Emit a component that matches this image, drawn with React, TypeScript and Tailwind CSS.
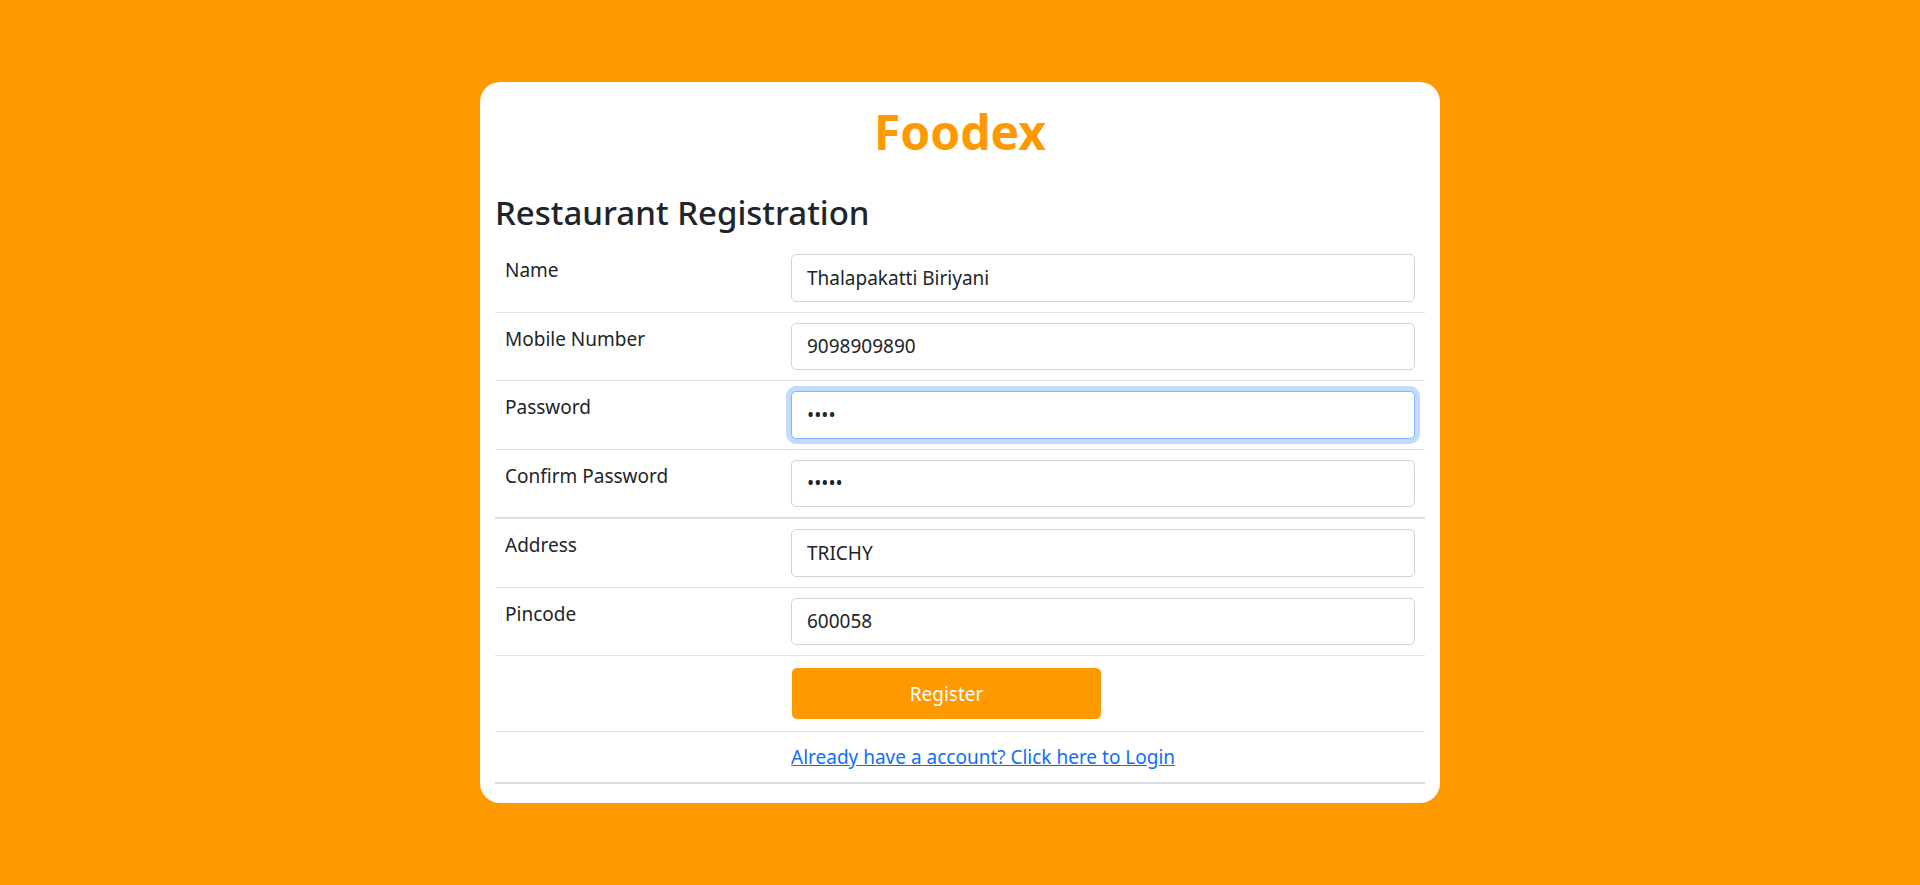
import { useState } from "react";

const fields = [
  { id: 1, label: "Name", type: "text", value: "Thalapakatti Biriyani" },
  { id: 2, label: "Mobile Number", type: "text", value: "9098909890" },
  { id: 3, label: "Password", type: "password", value: "1234", focused: true },
  { id: 4, label: "Confirm Password", type: "password", value: "12345", divider: true },
  { id: 5, label: "Address", type: "text", value: "TRICHY" },
  { id: 6, label: "Pincode", type: "text", value: "600058" },
];

const Field = ({ field }: { field: any }) => {
  const [value, setValue] = useState(field.value);

  return (
    <tr className={field.divider ? "border-b-2 border-[#dadde1]" : "border-b border-[#dee2e6]"}>
      <td className="w-[286px] px-[10px] pt-[11px] pb-[9px] align-top text-[#212529]">{field.label}</td>
      <td className="px-[10px] py-[10px] align-top">
        <input
          type={field.type}
          value={value}
          onChange={(e: any) => setValue(e.target.value)}
          className={`block w-full h-[47.5px] px-[15px] rounded-[5px] bg-white text-[19px] text-[#212529] outline-none border ${
            field.focused
              ? "border-[#86b7fe] shadow-[0_0_0_5px_rgba(13,110,253,0.25)]"
              : "border-[#ced4da]"
          }`}
        />
      </td>
    </tr>
  );
};

export default function App() {
  return (
    <div className="min-h-screen bg-[#ff9900] flex items-center justify-center font-['Noto_Sans',sans-serif] text-[19px] leading-[30px]">
      <div className="w-[960px] bg-white rounded-[20px] px-[15px] pt-[20px] pb-[19px]">
        <h1 className="text-center text-[48px] leading-[60px] font-bold text-[#ff9900]">Foodex</h1>

        <h3 className="mt-[30px] mb-[10px] text-[33px] leading-[42px] font-medium text-[#212529]">
          Restaurant Registration
        </h3>

        <form onSubmit={(e: any) => e.preventDefault()}>
          <table className="w-full table-fixed border-collapse">
            <tbody>
              {fields.map((f) => (
                <Field key={f.id} field={f} />
              ))}

              <tr className="border-b border-[#dee2e6]">
                <td className="w-[286px]"></td>
                <td className="px-[10px] py-[12px]">
                  <button
                    type="submit"
                    className="block w-[309px] h-[51px] rounded-[5px] bg-[#ff9900] text-white text-[19px] ml-px"
                  >
                    Register
                  </button>
                </td>
              </tr>

              <tr className="border-b-2 border-[#dadde1]">
                <td className="w-[286px]"></td>
                <td className="px-[10px] py-[10px]">
                  <a href="#" className="text-[#0d6efd] underline">
                    Already have a account? Click here to Login
                  </a>
                </td>
              </tr>
            </tbody>
          </table>
        </form>
      </div>
    </div>
  );
}
